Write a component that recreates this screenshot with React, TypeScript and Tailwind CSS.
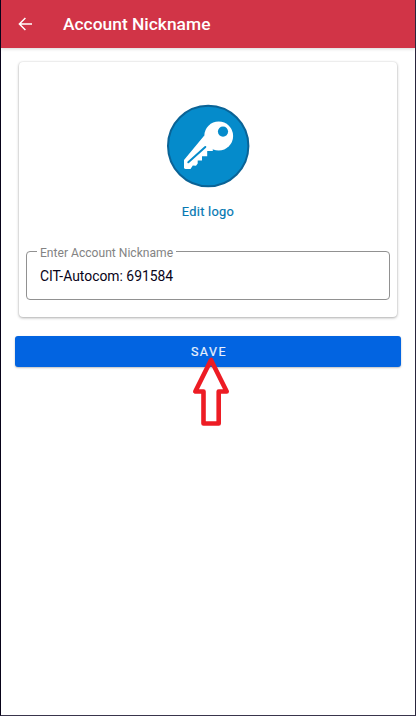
function BackArrow() {
  return (
    <svg width="16" height="16" viewBox="0 0 16 16" fill="none" stroke="#fff" strokeWidth="1.5">
      <path d="M15 8H2.4M8.4 2L2.4 8l6 6" />
    </svg>
  );
}

function KeyLogo() {
  return (
    <svg width="84" height="84" viewBox="166 104 84 84">
      <circle cx="208.2" cy="146" r="40.2" fill="#058bcb" stroke="#0a6396" strokeWidth="2" />
      <path
        d="M204.3 135.5L184 160v8.2l1.5.8h5l2.3-3.4 3.2.2 1.7-2.2v-3.2h4.3v-4.2h5.2v-5.2h5.6V148z"
        fill="#fff"
      />
      <circle cx="218.7" cy="136" r="14.4" fill="#fff" />
      <circle cx="223" cy="131.6" r="5.1" fill="#058bcb" />
      <path d="M188.3 162.3L205.3 147" stroke="#058bcb" strokeWidth="2" strokeLinecap="round" />
    </svg>
  );
}

function PointerArrow() {
  return (
    <svg className="absolute left-[190px] top-[356px]" width="40" height="72" viewBox="191 356 40 72" fill="none">
      <path
        d="M211 360L195.3 391.5H203.5V423.5H218.7V391.5H226.7Z"
        stroke="#ed1c24"
        strokeWidth="4.6"
        strokeLinejoin="round"
      />
    </svg>
  );
}

export default function App() {
  return (
    <div className="relative flex h-[716px] w-[416px] flex-col overflow-hidden border-x border-b border-l-[#080319] border-r-[#29253d] border-b-[#39354c] bg-white font-['Roboto',sans-serif]">
      <header className="flex h-12 shrink-0 items-center bg-[#d13447] pl-4 shadow-[0_1px_3px_rgba(0,0,0,0.16)]">
        <BackArrow />
        <h1 className="ml-[30px] text-[17.4px] font-medium leading-6 text-white">Account Nickname</h1>
      </header>
      <main className="flex flex-col">
        <section className="ml-[18px] mt-[14px] flex h-[255px] w-[378px] flex-col items-center rounded-[4px] bg-white pt-[42px] shadow-[0_1px_3px_rgba(0,0,0,0.3),0_0_2px_rgba(0,0,0,0.12)]">
          <KeyLogo />
          <button className="mt-4 text-[12.8px] leading-4 tracking-[0.28px] text-[#0579b3] [-webkit-text-stroke:0.2px_#0579b3]">Edit logo</button>
          <fieldset className="mt-[24px] h-[56px] w-[364px] rounded-[4px] border border-[#919191] pl-[10px]">
            <legend className="px-[3px] text-[12.1px] leading-[15px] text-[#838383]">
              <span className="relative top-[2px]">Enter Account Nickname</span>
            </legend>
            <div className="pl-[3px] pt-[7px] text-[13.9px] leading-5 text-[#090419]">CIT-Autocom: 691584</div>
          </fieldset>
        </section>
        <button className="ml-[14px] mt-[19px] h-[31px] w-[386px] rounded-[3px] bg-[#0264e1] pl-[2px] text-[12.5px] leading-[31px] tracking-[1.5px] text-[#e8f1fd] shadow-[0_1px_2px_rgba(0,0,0,0.25)] [-webkit-text-stroke:0.2px_#e8f1fd]">
          SAVE
        </button>
      </main>
      <PointerArrow />
    </div>
  );
}
